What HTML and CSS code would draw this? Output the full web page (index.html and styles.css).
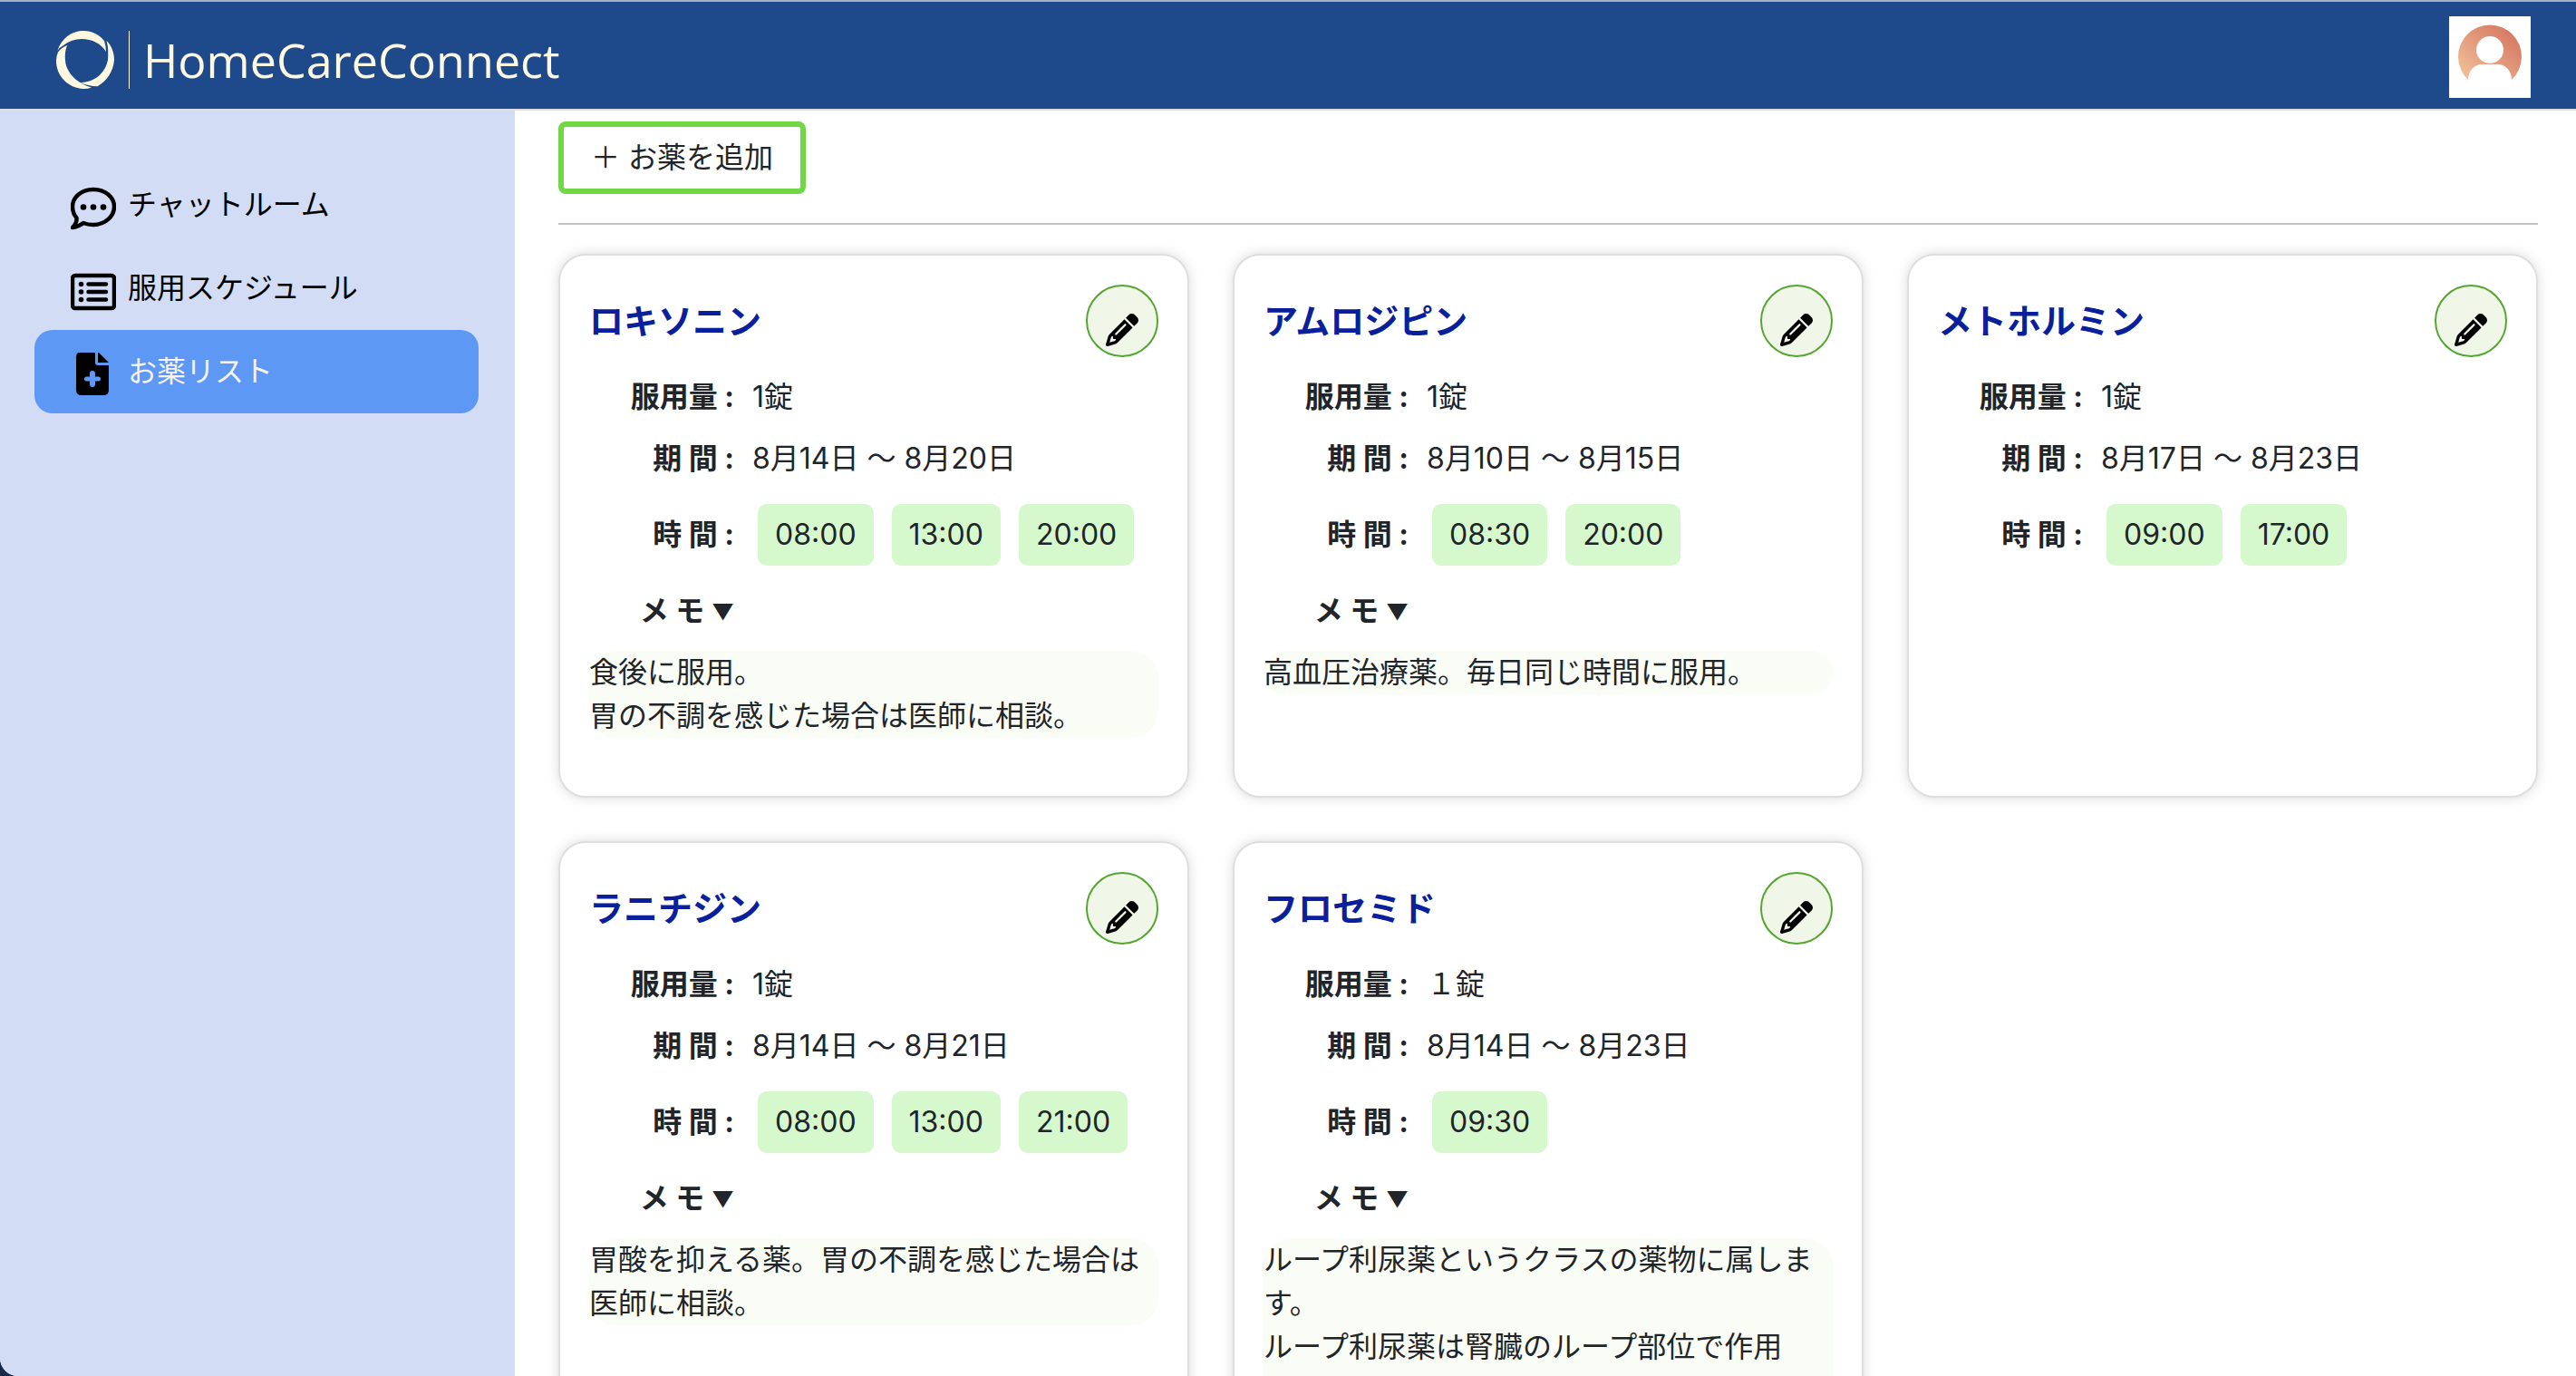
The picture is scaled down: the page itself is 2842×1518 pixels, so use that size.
FILE: index.html
```html
<!DOCTYPE html>
<html lang="ja">
<head>
<meta charset="utf-8">
<meta name="viewport" content="width=device-width, initial-scale=1">
<title>HomeCareConnect</title>
<link rel="stylesheet" href="styles.css">
</head>
<body>
<svg class="sprite" aria-hidden="true">
  <symbol id="pencil" viewBox="0 0 512 512"><path d="M410.300 231l11.300-11.300-33.900-33.900-62.100-62.100L291.700 89.800l-11.300 11.300-22.600 22.600L58.600 322.900c-10.400 10.400-18 23.300-22.200 37.400L1 480.700c-2.500 8.400-.2 17.500 6.100 23.700s15.300 8.500 23.700 6.100l120.300-35.400c14.100-4.200 27-11.800 37.400-22.200L387.700 253.700 410.300 231zM160 399.400l-9.100 22.700c-4 3.100-8.500 5.400-13.300 6.900L59.400 452l23-78.100c1.400-4.900 3.800-9.400 6.900-13.300l22.700-9.100v32c0 8.800 7.200 16 16 16h32zM362.700 18.700L348.300 33.200 325.700 55.800 314.300 67.100l33.900 33.900 62.100 62.100 33.900 33.900 11.300-11.300 22.600-22.600 14.500-14.500c25-25 25-65.500 0-90.500L453.300 18.700c-25-25-65.500-25-90.500 0zm-47.400 168l-144 144c-6.200 6.200-16.400 6.200-22.600 0s-6.200-16.400 0-22.600l144-144c6.200-6.200 16.400-6.200 22.600 0s6.200 16.400 0 22.600z"/></symbol>
</svg>
<div class="app">
  <header class="topbar">
    <a class="brand" href="#">
      <svg class="brand-mark" viewBox="0 0 64 64" aria-hidden="true">
        <path d="M1.300 22C6 8 17 0 30 0C40 0 47 4 53 11Q55 17 55 23C49 14 40 9 28 9Q17 9 8 16Q4 18 1.300 22Z"/>
        <path d="M12.300 16C9 22 9 34 12 41C16 50 24 58 39 62.500Q35 64 30 64C13 63 0 50 0 33Q0 28 2 23.500Q6 18 12.300 16Z"/>
        <path d="M55.600 11C61 16 64 24 64 32C63 45 56 55 45.500 61.300Q35 61 26.500 57C42 57 54 47 57 32Q58 20 55.600 11Z"/>
      </svg>
      <span class="brand-name">HomeCareConnect</span>
    </a>
    <button class="avatar" type="button" aria-label="アカウント">
      <svg viewBox="0 0 90 90" aria-hidden="true">
        <defs><linearGradient id="skin" x1="0" y1="1" x2="1" y2="0"><stop offset="0.1" stop-color="#f0bd97"/><stop offset="0.9" stop-color="#d47660"/></linearGradient></defs>
        <path fill="url(#skin)" d="M21 70A35 35 0 1 1 69 70C69 60 62 53 54 53H36C28 53 21 60 21 70Z"/>
        <circle cx="45" cy="37" r="15" fill="#fff"/>
      </svg>
    </button>
  </header>
  <div class="body">
    <nav class="sidebar">
      <a class="nav-item" href="#">
        <svg class="nav-icon" viewBox="0 0 50 50" aria-hidden="true"><path d="M25 4C38 4 48 12.500 48 23S38 43 25 43Q19 43 14 41Q9 45 2 46Q7 41 6.500 35.500Q2 30 2 23C2 12.500 12 4 25 4Z" fill="none" stroke="currentColor" stroke-width="4.500" stroke-linejoin="round"/><circle cx="14" cy="23.500" r="3.300"/><circle cx="25" cy="23.500" r="3.300"/><circle cx="36" cy="23.500" r="3.300"/></svg>
        <span>チャットルーム</span>
      </a>
      <a class="nav-item" href="#">
        <svg class="nav-icon" viewBox="0 0 50 50" aria-hidden="true"><rect x="2" y="7" width="46" height="36" rx="3" fill="none" stroke="currentColor" stroke-width="4.500"/><circle cx="11.500" cy="16.500" r="2.800"/><circle cx="11.500" cy="25" r="2.800"/><circle cx="11.500" cy="33.500" r="2.800"/><path d="M19.500 16.500H39M19.500 25H39M19.500 33.500H39" stroke="currentColor" stroke-width="4.500" stroke-linecap="round"/></svg>
        <span>服用スケジュール</span>
      </a>
      <a class="nav-item active" href="#" aria-current="page">
        <svg class="nav-icon" viewBox="0 2 50 50" aria-hidden="true"><path fill-rule="evenodd" d="M12 1H27V13Q27 16 30 16H42V43Q42 49 36 49H12Q6 49 6 43V7Q6 1 12 1ZM21 25V28.500H17.500Q15 28.500 15 31T17.500 33.500H21V37Q21 40 24 40T27 37V33.500H30.500Q33 33.500 33 31T30.500 28.500H27V25Q27 22 24 22T21 25Z"/><path d="M30 1L42 13H30Z"/></svg>
        <span>お薬リスト</span>
      </a>
    </nav>
    <main class="content">
      <div class="toolbar"><button class="add" type="button">＋ お薬を追加</button></div>
      <div class="cards">
        <article class="card">
          <div class="card-head"><h2>ロキソニン</h2><button class="edit" type="button" aria-label="編集"><svg><use href="#pencil"/></svg></button></div>
          <div class="row"><b>服用量 :</b><span>1錠</span></div>
          <div class="row"><b>期 間 :</b><span>8月14日 〜 8月20日</span></div>
          <div class="row times"><b>時 間 :</b><span class="chip">08:00</span><span class="chip">13:00</span><span class="chip">20:00</span></div>
          <div class="row"><b>メ モ <small>▼</small></b></div>
          <p class="memo">食後に服用。<br>胃の不調を感じた場合は医師に相談。</p>
        </article>
        <article class="card">
          <div class="card-head"><h2>アムロジピン</h2><button class="edit" type="button" aria-label="編集"><svg><use href="#pencil"/></svg></button></div>
          <div class="row"><b>服用量 :</b><span>1錠</span></div>
          <div class="row"><b>期 間 :</b><span>8月10日 〜 8月15日</span></div>
          <div class="row times"><b>時 間 :</b><span class="chip">08:30</span><span class="chip">20:00</span></div>
          <div class="row"><b>メ モ <small>▼</small></b></div>
          <p class="memo">高血圧治療薬。毎日同じ時間に服用。</p>
        </article>
        <article class="card">
          <div class="card-head"><h2>メトホルミン</h2><button class="edit" type="button" aria-label="編集"><svg><use href="#pencil"/></svg></button></div>
          <div class="row"><b>服用量 :</b><span>1錠</span></div>
          <div class="row"><b>期 間 :</b><span>8月17日 〜 8月23日</span></div>
          <div class="row times"><b>時 間 :</b><span class="chip">09:00</span><span class="chip">17:00</span></div>
        </article>
        <article class="card">
          <div class="card-head"><h2>ラニチジン</h2><button class="edit" type="button" aria-label="編集"><svg><use href="#pencil"/></svg></button></div>
          <div class="row"><b>服用量 :</b><span>1錠</span></div>
          <div class="row"><b>期 間 :</b><span>8月14日 〜 8月21日</span></div>
          <div class="row times"><b>時 間 :</b><span class="chip">08:00</span><span class="chip">13:00</span><span class="chip">21:00</span></div>
          <div class="row"><b>メ モ <small>▼</small></b></div>
          <p class="memo">胃酸を抑える薬。胃の不調を感じた場合は医師に相談。</p>
        </article>
        <article class="card">
          <div class="card-head"><h2>フロセミド</h2><button class="edit" type="button" aria-label="編集"><svg><use href="#pencil"/></svg></button></div>
          <div class="row"><b>服用量 :</b><span>１錠</span></div>
          <div class="row"><b>期 間 :</b><span>8月14日 〜 8月23日</span></div>
          <div class="row times"><b>時 間 :</b><span class="chip">09:30</span></div>
          <div class="row"><b>メ モ <small>▼</small></b></div>
          <p class="memo memo-long">ループ利尿薬というクラスの薬物に属します。<br>ループ利尿薬は腎臓のループ部位で作用</p>
        </article>
      </div>
    </main>
  </div>
</div>
</body>
</html>
```
FILE: styles.css
```css
* { box-sizing: border-box; }

body {
  margin: 0;
  background: #16294a;
  color: #212529;
  font: 32px/48px Inter, "Noto Sans CJK JP", sans-serif;
}

.sprite { display: none; }

button {
  padding: 0;
  font: inherit;
  color: inherit;
  cursor: pointer;
}

a { color: inherit; text-decoration: none; }

.app {
  display: flex;
  flex-direction: column;
  height: 100vh;
  overflow: hidden;
  background: #fff;
  border-bottom-left-radius: 20px;
}

.topbar {
  display: flex;
  flex: none;
  align-items: flex-start;
  justify-content: space-between;
  height: 122px;
  padding: 16px 50px 0 62px;
  background: #1e4a8c;
  border-top: 2px solid #a5b1c8;
  border-bottom: 2px solid #dedede;
}

.brand {
  display: flex;
  gap: 16px;
  padding-top: 16px;
  color: #fff8e1;
}

.brand-mark {
  width: 64px;
  height: 64px;
  fill: currentColor;
}

.brand-name {
  height: 64px;
  padding-left: 15px;
  border-left: 1px solid currentColor;
  font: 400 52px/64px "Open Sans", sans-serif;
}

.avatar {
  width: 90px;
  height: 90px;
  border: 0;
  background: #fff;
}

.avatar svg { display: block; }

.body {
  display: flex;
  flex: 1;
  min-height: 0;
}

.sidebar {
  flex: none;
  width: 568px;
  padding: 58px 40px 0 38px;
  background: #d2dcf5;
  color: #000;
}

.nav-item {
  display: flex;
  align-items: center;
  gap: 13px;
  height: 92px;
  padding: 0 40px;
  border-radius: 20px;
}

.nav-item.active { background: #5e98f5; }
.nav-item.active span { color: #f6f3ee; }

.nav-icon {
  width: 50px;
  height: 50px;
  margin-top: 8px;
  fill: #000;
}

.content {
  flex: 1;
  min-width: 0;
  padding: 12px 42px 48px 48px;
  overflow: hidden;
}

.toolbar {
  padding-bottom: 32px;
  border-bottom: 2px solid #c4c4c4;
}

.add {
  display: block;
  height: 80px;
  padding: 0 30px;
  border: 6px solid #70d844;
  border-radius: 8px;
  background: #fff;
}

.cards {
  display: grid;
  grid-template-columns: repeat(3, 1fr);
  gap: 48px;
  padding-top: 32px;
}

.card {
  display: flex;
  flex-direction: column;
  gap: 20px;
  min-height: 600px;
  padding: 32px;
  border: 2px solid #dedede;
  border-radius: 30px;
  background: #fff;
  box-shadow: 0 0 14px rgba(0, 0, 0, 0.15);
}

.card-head {
  display: flex;
  align-items: center;
  justify-content: space-between;
}

h2 {
  margin: 0;
  color: #0a1f9c;
  font-size: 38px;
  font-weight: 700;
}

.edit {
  display: flex;
  align-items: center;
  justify-content: center;
  width: 80px;
  height: 80px;
  padding-top: 20px;
  border: 2px solid #55a630;
  border-radius: 50%;
  background: #f0f6e8;
}

.edit svg { width: 36px; height: 36px; fill: #000; }

.row {
  display: flex;
  align-items: center;
  gap: 20px;
}

.row b {
  width: 160px;
  font-weight: 700;
  text-align: right;
}

.row small {
  font-size: 24px;
  line-height: 24px;
  vertical-align: 1px;
}

.times { padding: 6px 0; }
.times b { margin-right: 6px; }

.chip {
  padding: 10px 19px;
  border-radius: 10px;
  background: #d5f9cc;
}

.memo {
  margin: 0;
  border-radius: 30px;
  background: #fafdf6;
}

.memo-long { padding-bottom: 48px; }
```
